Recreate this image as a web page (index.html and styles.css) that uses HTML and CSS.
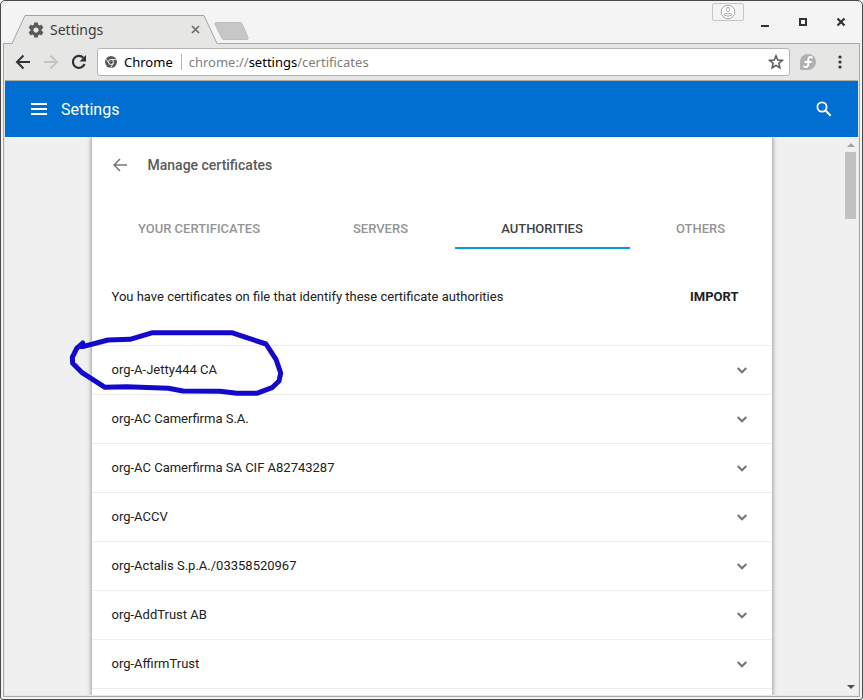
FILE: index.html
```html
<!DOCTYPE html>
<html lang="en">
<head>
<meta charset="utf-8">
<title>Settings</title>
<link rel="stylesheet" href="styles.css">
</head>
<body>
<div class="window">
  <header class="titlebar">
    <div class="tab">
      <svg class="tab-shape" width="207" height="29" viewBox="0 0 207 29" aria-hidden="true"><path d="M0 29V28.500H1L14 .5H193L206 28.500V29Z" fill="#e6e6e4"/><path d="M-1 28.500H1L14 .5H193L206 28.500H207" fill="none" stroke="#a3a4a0"/></svg>
      <svg class="gear" width="18" height="18" viewBox="0 0 24 24" aria-hidden="true"><path fill="#5a5a5a" d="M19.430 12.980c.04-.32.070-.64.070-.98s-.03-.66-.07-.98l2.110-1.650c.19-.15.240-.42.120-.64l-2-3.460c-.12-.22-.39-.3-.61-.22l-2.490 1c-.52-.4-1.080-.73-1.690-.98l-.38-2.650C14.460 2.180 14.250 2 14 2h-4c-.25 0-.46.180-.49.420l-.38 2.650c-.61.250-1.170.590-1.690.980l-2.490-1c-.23-.09-.49 0-.61.220l-2 3.460c-.13.220-.07.490.120.640l2.110 1.650c-.04.320-.07.650-.07.980s.03.660.070.980l-2.110 1.650c-.19.150-.24.420-.12.640l2 3.460c.12.220.390.300.610.220l2.490-1c.52.400 1.080.730 1.690.980l.38 2.650c.03.240.240.420.490.420h4c.25 0 .46-.18.490-.42l.38-2.650c.61-.25 1.170-.59 1.690-.98l2.490 1c.23.090.490 0 .61-.22l2-3.460c.12-.22.070-.49-.12-.64l-2.110-1.650zM12 15.500c-1.930 0-3.500-1.570-3.500-3.500s1.570-3.500 3.500-3.500 3.500 1.570 3.500 3.500-1.570 3.500-3.500 3.500z"/></svg>
      <span class="tab-title">Settings</span>
      <button class="tab-close" aria-label="Close tab"><svg width="9" height="9" viewBox="0 0 9 9"><path d="M1 1l7 7M8 1l-7 7" stroke="#6b6b6b" stroke-width="1.700"/></svg></button>
    </div>
    <button class="new-tab" aria-label="New tab"><svg width="36" height="19" viewBox="0 0 36 19"><path d="M2.500 .5H26Q27.500 .5 28 1.500L34 15.500Q34.500 17.500 33 17.500H10Q8.500 17.500 8 16.500L1 2.500Q.5 .5 2.500 .5Z" fill="#c7c7c7" stroke="#bdbdbd"/></svg></button>
    <button class="profile" aria-label="Profile"><svg width="16" height="16" viewBox="0 0 16 16" fill="none" stroke="#aaa"><circle cx="8" cy="8" r="6.800" fill="#fff"/><ellipse cx="8" cy="5.500" rx="1.700" ry="2.100"/><path d="M4 10.800Q4 9.500 6.500 9.300Q8 10.500 9.500 9.300Q12 9.500 12 10.800Q8 13.500 4 10.800Z"/></svg></button>
    <div class="window-buttons">
      <button aria-label="Minimize"><svg width="10" height="10" viewBox="0 0 10 10"><path d="M1 9h8" stroke="#2e3436" stroke-width="2"/></svg></button>
      <button aria-label="Maximize"><svg width="10" height="10" viewBox="0 0 10 10"><path d="M2 2h6v6H2Z" fill="none" stroke="#2e3436" stroke-width="2"/></svg></button>
      <button aria-label="Close"><svg width="10" height="10" viewBox="0 0 10 10"><path d="M1.500 1.500l7 7M8.500 1.500l-7 7" stroke="#2e3436" stroke-width="2.200"/></svg></button>
    </div>
  </header>
  <div class="frame">
    <nav class="toolbar">
      <button class="tool" aria-label="Back"><svg width="16" height="16" viewBox="0 0 16 16" fill="none" stroke="#2e3436" stroke-width="2"><path d="M15 8H2.500M8.500 1.500L2 8l6.500 6.500"/></svg></button>
      <button class="tool" aria-label="Forward" disabled><svg width="16" height="16" viewBox="0 0 16 16" fill="none" stroke="#c5c5c3" stroke-width="2"><path d="M1 8h12.500M7.500 1.500L14 8l-6.500 6.500"/></svg></button>
      <button class="tool" aria-label="Reload"><svg width="16" height="16" viewBox="0 0 16 16"><path d="M13.500 10A6 6 0 1 1 12.300 3.800" fill="none" stroke="#2e3436" stroke-width="2.200"/><path d="M15 1v6.500H8.500Z" fill="#2e3436"/></svg></button>
      <div class="omnibox">
        <svg class="chrome-icon" width="12" height="12" viewBox="0 0 12 12" aria-hidden="true"><circle cx="6" cy="6" r="6" fill="#5a5a5a"/><circle cx="6" cy="6" r="2.500" fill="#5a5a5a" stroke="#fff" stroke-width=".9"/><path d="M6 3.500H11.500M3.800 7.200L1 2.700M8.200 7.200L5.700 12" stroke="#fff" stroke-width=".8"/></svg>
        <span class="origin">Chrome</span>
        <span class="url" role="textbox" aria-label="Address" tabindex="0">chrome://<b>settings</b>/certificates</span>
        <button class="star" aria-label="Bookmark this page"><svg width="16" height="16" viewBox="0 0 16 16"><path d="M8 1.800L9.700 6.100L14.300 6.400L10.800 9.300L11.900 13.800L8 11.300L4.100 13.800L5.200 9.300L1.700 6.400L6.300 6.100Z" fill="none" stroke="#5a5a5a" stroke-width="1.500"/></svg></button>
      </div>
      <button class="fedora" aria-label="Fedora extension"><svg width="16" height="16" viewBox="0 0 16 16"><path d="M8 0a8 8 0 1 1 0 16H1.500Q0 16 0 14.500V8A8 8 0 0 1 8 0Z" fill="#b0b0b0"/><path d="M12 3.600C10.200 2.300 8.300 3.200 8.300 5.500V10.300C8.300 12.800 6 13.800 4 12.500M5.300 8H11" fill="none" stroke="#fff" stroke-width="1.900" stroke-linecap="round"/></svg></button>
      <button class="menu" aria-label="Chrome menu"><svg width="4" height="14" viewBox="0 0 4 14" fill="#2e3436"><circle cx="2" cy="2" r="1.600"/><circle cx="2" cy="7" r="1.600"/><circle cx="2" cy="12" r="1.600"/></svg></button>
    </nav>
    <div class="page">
      <header class="appbar">
        <button aria-label="Main menu"><svg width="16" height="12" viewBox="0 0 16 12" fill="#fff"><path d="M0 0h16v2H0zM0 5h16v2H0zM0 10h16v2H0z"/></svg></button>
        <h1>Settings</h1>
        <button class="search" aria-label="Search settings"><svg width="16" height="16" viewBox="0 0 16 16" fill="none" stroke="#fff"><circle cx="6" cy="6" r="4.600" stroke-width="1.800"/><path d="M9.500 9.500L14.700 14.700" stroke-width="2"/></svg></button>
      </header>
      <div class="content">
        <main class="card">
          <div class="heading">
            <button aria-label="Back to settings"><svg width="14" height="14" viewBox="0 0 14 14" fill="none" stroke="#757575" stroke-width="1.500"><path d="M14 7H1.500M7 1L1 7l6 6"/></svg></button>
            <h2>Manage certificates</h2>
          </div>
          <div class="tabs" role="tablist">
            <button role="tab">YOUR CERTIFICATES</button>
            <button role="tab">SERVERS</button>
            <button role="tab" class="selected" aria-selected="true">AUTHORITIES</button>
            <button role="tab">OTHERS</button>
          </div>
          <div class="intro">
            <p>You have certificates on file that identify these certificate authorities</p>
            <button>IMPORT</button>
          </div>
          <ul class="list">
            <li><span>org-A-Jetty444 CA</span><button aria-label="Expand org-A-Jetty444 CA"><svg width="10" height="7" viewBox="0 0 10 7"><path d="M.7 1L5 5.300L9.300 1"/></svg></button>
              <svg class="marker" width="216" height="68" viewBox="0 0 216 68" aria-hidden="true"><path d="M13.700 17.700L39 11L61 10.300L83.700 3.700H162.700L177.700 8.700L197 15L207 30.300L211.700 44L210 52L203 58.700L187.700 64.300H167.700L151 62.300L114 62L99.300 59.300L57.700 57.700L36 58.300L12.700 43.300L3.700 34.300L3.300 28.300L7.700 19.300L13.700 14V20"/></svg></li>
            <li><span>org-AC Camerfirma S.A.</span><button aria-label="Expand org-AC Camerfirma S.A."><svg width="10" height="7" viewBox="0 0 10 7"><path d="M.7 1L5 5.300L9.300 1"/></svg></button></li>
            <li><span>org-AC Camerfirma SA CIF A82743287</span><button aria-label="Expand org-AC Camerfirma SA CIF A82743287"><svg width="10" height="7" viewBox="0 0 10 7"><path d="M.7 1L5 5.300L9.300 1"/></svg></button></li>
            <li><span>org-ACCV</span><button aria-label="Expand org-ACCV"><svg width="10" height="7" viewBox="0 0 10 7"><path d="M.7 1L5 5.300L9.300 1"/></svg></button></li>
            <li><span>org-Actalis S.p.A./03358520967</span><button aria-label="Expand org-Actalis S.p.A./03358520967"><svg width="10" height="7" viewBox="0 0 10 7"><path d="M.7 1L5 5.300L9.300 1"/></svg></button></li>
            <li><span>org-AddTrust AB</span><button aria-label="Expand org-AddTrust AB"><svg width="10" height="7" viewBox="0 0 10 7"><path d="M.7 1L5 5.300L9.300 1"/></svg></button></li>
            <li><span>org-AffirmTrust</span><button aria-label="Expand org-AffirmTrust"><svg width="10" height="7" viewBox="0 0 10 7"><path d="M.7 1L5 5.300L9.300 1"/></svg></button></li>
          </ul>
        </main>
        <div class="scrollbar" aria-hidden="true">
          <svg width="8" height="4" viewBox="0 0 8 4"><path d="M0 4L4 0l4 4z" fill="#a3a3a3"/></svg>
          <div class="thumb"></div>
          <svg class="down" width="8" height="4" viewBox="0 0 8 4"><path d="M0 0h8L4 4z" fill="#505050"/></svg>
        </div>
      </div>
    </div>
  </div>
</div>
</body>
</html>
```
FILE: styles.css
```css
* {
  box-sizing: border-box;
}

body {
  margin: 0;
  background: #fff;
  font-family: Roboto, sans-serif;
  font-size: 13px;
  line-height: 16px;
  color: #212121;
}

button {
  display: flex;
  align-items: center;
  justify-content: center;
  padding: 0;
  border: 0;
  background: none;
  font: inherit;
  color: inherit;
}

svg {
  display: block;
  flex: none;
}

h1, h2, p, ul {
  margin: 0;
  padding: 0;
}

.window {
  display: flex;
  flex-direction: column;
  height: 100vh;
  padding: 0 2px 2px;
  border: 1px solid #4c484a;
  border-radius: 5px 5px 3px 3px;
  background: #f4f4f4;
}

/* Window title bar */
.titlebar {
  display: flex;
  align-items: flex-start;
  height: 42px;
  flex: none;
}

.tab {
  position: relative;
  z-index: 1;
  display: flex;
  align-items: center;
  width: 207px;
  height: 29px;
  margin: 14px 0 0 8px;
  padding: 0 18px 0 16px;
}

.tab-shape {
  position: absolute;
  left: 0;
  top: 0;
}

.gear,
.tab-title,
.tab-close {
  position: relative;
}

.tab-title {
  flex: 1;
  margin-left: 5px;
  font: 14px/20px "Noto Sans", sans-serif;
  color: #3c3c3c;
}

.new-tab {
  margin: 21px 0 0 -4px;
}

.profile {
  width: 32px;
  height: 18px;
  margin: 2px 16px 0 auto;
  border: 1px solid #c6c6c6;
  border-radius: 2px;
}

.window-buttons {
  display: flex;
  gap: 28px;
  margin: 16px 14px 0 0;
}

/* Browser frame and toolbar */
.frame {
  display: flex;
  flex-direction: column;
  flex: 1;
  min-height: 0;
  padding: 0 1px 1px;
  border: 1px solid #a8a8a5;
  background: #e6e6e4;
}

.toolbar {
  display: flex;
  align-items: center;
  height: 37px;
  flex: none;
  padding: 0 16px 0 10px;
  border-bottom: 1px solid #b0aca8;
}

.tool {
  width: 16px;
  margin-right: 12px;
}

.omnibox {
  display: flex;
  align-items: center;
  flex: 1;
  height: 28px;
  margin-left: -2px;
  padding: 0 5px 0 7px;
  border: 1px solid #b4b4b1;
  border-radius: 3px;
  background: #fff;
  font: 13px/16px "Noto Sans", sans-serif;
}

.origin {
  margin-left: 7px;
  padding-right: 8px;
  border-right: 1px solid #b5b5b5;
  color: #000;
}

.url {
  flex: 1;
  margin-left: 7px;
  color: #808080;
}

.url b {
  font-weight: 400;
  color: #000;
}

.fedora {
  margin-left: 10px;
}

.menu {
  margin-left: 22px;
}

/* Settings page */
.page {
  display: flex;
  flex-direction: column;
  flex: 1;
  min-height: 0;
  background: #f0f0f0;
}

.appbar {
  display: flex;
  align-items: center;
  height: 56px;
  flex: none;
  padding: 0 26px;
  background: #006fd1;
  color: #fff;
}

.appbar h1 {
  margin-left: 14px;
  font-size: 16px;
  font-weight: 400;
  line-height: normal;
}

.search {
  margin-left: auto;
}

.content {
  display: grid;
  grid-template-columns: 1fr minmax(0, 680px) 1fr;
  flex: 1;
  min-height: 0;
  overflow: hidden;
}

.card {
  grid-column: 2;
  background: #fff;
  box-shadow: 0 1px 4px 1px rgba(0, 0, 0, 0.35);
}

.heading {
  display: flex;
  align-items: center;
  height: 56px;
  padding-left: 21px;
}

.heading h2 {
  margin-left: 21px;
  font-size: 14px;
  font-weight: 500;
  color: #5a5a5a;
}

.tabs {
  display: grid;
  grid-template-columns: 215fr 148fr 175fr 142fr;
  height: 40px;
  margin-top: 16px;
}

.tabs button {
  border: solid transparent;
  border-width: 2px 0;
  font-weight: 500;
  color: #959595;
}

.tabs .selected {
  border-bottom-color: #039be5;
  color: #424242;
}

.intro {
  display: flex;
  align-items: center;
  justify-content: space-between;
  height: 96px;
  padding: 0 33px 0 20px;
}

.intro button {
  font-weight: 700;
}

.list {
  list-style: none;
  border-bottom: 1px solid #ededed;
}

.list li {
  position: relative;
  display: flex;
  align-items: center;
  justify-content: space-between;
  height: 49px;
  padding: 0 25px 0 20px;
  border-top: 1px solid #ededed;
}

.list button path {
  fill: none;
  stroke: #757575;
  stroke-width: 2;
}

/* Hand-drawn highlight over the first entry */
.marker {
  position: absolute;
  z-index: 1;
  left: -23px;
  top: -17px;
}

.marker path {
  fill: none;
  stroke: #1408cc;
  stroke-width: 5;
  stroke-linejoin: round;
}

.scrollbar {
  display: flex;
  flex-direction: column;
  align-items: center;
  justify-self: end;
  width: 11px;
  margin-right: 2px;
  padding: 6px 0;
}

.thumb {
  width: 11px;
  height: 67px;
  margin-top: 5px;
  background: #c1c1c1;
}

.down {
  margin-top: auto;
}
```
